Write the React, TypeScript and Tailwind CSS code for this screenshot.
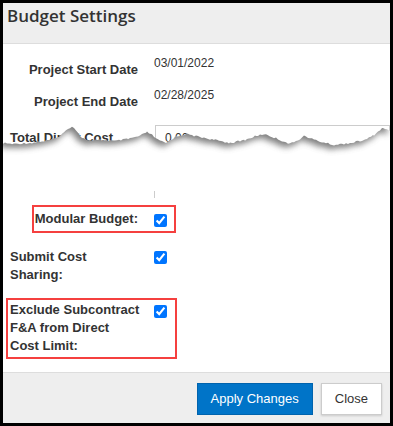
const EDGE: [number, number][] = [
  [3, 143], [12, 144], [30, 143], [45, 141], [55, 139], [62, 134], [68, 129], [72, 126],
  [76, 130], [82, 138], [90, 141], [100, 140], [115, 141], [128, 139], [140, 136],
  [147, 132], [152, 135], [158, 140], [166, 143], [175, 137], [186, 134], [200, 137],
  [215, 140], [230, 143], [245, 140], [256, 136], [264, 134], [278, 139], [290, 144],
  [298, 140], [304, 136], [318, 141], [334, 145], [350, 143], [365, 140], [374, 135],
  [380, 130], [383, 128], [390, 131],
];

// page coords -> section coords (section starts at x=3, y=118)
function edgePoints() {
  const pts: string[] = [];
  let n = 0;
  for (let i = 0; i < EDGE.length - 1; i++) {
    const [x0, y0] = EDGE[i];
    const [x1, y1] = EDGE[i + 1];
    for (let x = x0; x < x1; x += 2) {
      const t = (x - x0) / (x1 - x0);
      const r = Math.sin(++n * 12.9898) * 43758.5453;
      const jit = (r - Math.floor(r) - 0.5) * 1.6;
      pts.push(`${x - 3},${(y0 + (y1 - y0) * t + jit - 118).toFixed(1)}`);
    }
  }
  const [lx, ly] = EDGE[EDGE.length - 1];
  pts.push(`${lx - 3},${ly - 118}`);
  return pts;
}

const pts = edgePoints();
const below = `M${pts.join(' L')} L387,73 L0,73 Z`;
const above = `M${pts.join(' L')} L387,-30 L0,-30 Z`;

function TornEdge() {
  return (
    <svg className="absolute inset-0 pointer-events-none" width={387} height={73} viewBox="0 0 387 73">
      <defs>
        <clipPath id="belowClip">
          <path d={below} />
        </clipPath>
        <filter id="tearBlur" x="-5%" y="-50%" width="110%" height="200%">
          <feGaussianBlur stdDeviation="3" />
        </filter>
      </defs>
      <path d={below} fill="#ffffff" />
      <g clipPath="url(#belowClip)">
        <path d={above} fill="#555555" opacity={0.75} filter="url(#tearBlur)" transform="translate(-3,4)" />
      </g>
    </svg>
  );
}

function Check() {
  return (
    <input
      type="checkbox"
      defaultChecked
      readOnly
      className="m-0 w-[13px] h-[13px] accent-[#0075ff] shrink-0"
    />
  );
}

const label = 'text-[13px] leading-[18px] font-bold whitespace-nowrap';

export default function App() {
  return (
    <div className="w-[393px] h-[426px] border-[3px] border-black bg-white flex flex-col font-['Liberation_Sans',Arial,sans-serif] text-[#333]">
      {/* Header */}
      <div className="h-[41px] shrink-0 bg-[#eeeeee] border-b border-[#dddddd] pl-[4px] pt-[1px]">
        <h2 className="font-['Open_Sans',sans-serif] font-semibold text-[17px] leading-[24px] text-[#333]">
          Budget Settings
        </h2>
      </div>

      {/* Body */}
      <div className="flex-1 flex flex-col px-[7px] pt-[10px]">
        <div className="flex h-[32px]">
          <div className={`w-[128px] text-right mt-[7px] ${label}`}>Project Start Date</div>
          <div className="ml-[16px] text-[12px] leading-[18px]">03/01/2022</div>
        </div>
        <div className="flex h-[32px]">
          <div className={`w-[128px] text-right mt-[7px] ${label}`}>Project End Date</div>
          <div className="ml-[16px] text-[12px] leading-[18px]">02/28/2025</div>
        </div>

        {/* Torn section */}
        <div className="relative h-[73px] -mx-[7px] px-[7px] overflow-hidden">
          <div className="flex">
            <div className={`w-[128px] mt-[11px] ${label}`}>Total Direct Cost</div>
            <div className="ml-[17px] mt-[7px] h-[26px] flex-1 -mr-[7px] border border-[#cccccc] pl-[9px] text-[12px] leading-[24px]">
              0.00
            </div>
          </div>
          <TornEdge />
        </div>
        <div className="ml-[144px] w-px h-[7px] bg-[#cccccc]" />

        {/* Modular Budget */}
        <div className="mt-[7px] ml-[22px] w-[144px] border-2 border-[#f5403f] flex pt-[3px] pb-[3px] pr-[7px]">
          <div className={`w-[104px] text-right ${label}`}>Modular Budget:</div>
          <div className="ml-[16px] mt-[4px] flex">
            <Check />
          </div>
        </div>

        {/* Submit Cost Sharing */}
        <div className="mt-[15px] flex">
          <div className={`w-[128px] ${label}`}>
            Submit Cost
            <br />
            Sharing:
          </div>
          <div className="ml-[16px] mt-[3px] flex">
            <Check />
          </div>
        </div>

        {/* Exclude Subcontract */}
        <div className="mt-[14px] -ml-[4px] w-[171px] border-2 border-[#f5403f] flex pl-[2px] pt-[1px] pb-[2px] pr-[8px]">
          <div className={`w-[128px] ${label}`}>
            Exclude Subcontract
            <br />
            F&amp;A from Direct
            <br />
            Cost Limit:
          </div>
          <div className="ml-[16px] mt-[4px] flex">
            <Check />
          </div>
        </div>
      </div>

      {/* Footer */}
      <div className="h-[51px] shrink-0 border-t border-[#dddddd] bg-[#eeeeee] flex justify-end items-start gap-[8px] pr-[8px] pt-[10px]">
        <button className="h-[32px] px-[13px] bg-[#0074c8] border border-[#0063ad] text-white text-[13px]">
          Apply Changes
        </button>
        <button className="h-[32px] px-[13px] bg-white border border-[#cccccc] text-[#333] text-[13px] shadow-[0_1px_2px_rgba(0,0,0,0.15)]">
          Close
        </button>
      </div>
    </div>
  );
}
